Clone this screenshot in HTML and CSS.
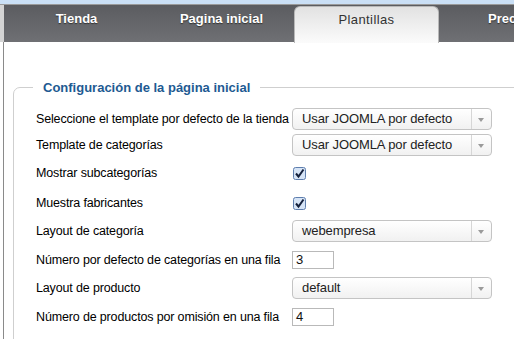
FILE: index.html
```html
<!DOCTYPE html>
<html lang="es">
<head>
    <meta charset="UTF-8">
    <meta name="viewport" content="width=device-width, initial-scale=1.0">
    <title>Plantillas</title>
    <link rel="stylesheet" href="styles.css">
</head>
<body>
    <div class="topstrip"></div>
    <div class="panel">
        <ul class="tabs">
            <li>Tienda</li>
            <li>Pagina inicial</li>
            <li class="active">Plantillas</li>
            <li>Precios</li>
        </ul>
        <fieldset class="config">
            <legend>Configuración de la página inicial</legend>
            <div class="row">
                <label>Seleccione el template por defecto de la tienda</label>
                <div class="select">Usar JOOMLA por defecto<span class="arrow"></span></div>
            </div>
            <div class="row">
                <label>Template de categorías</label>
                <div class="select">Usar JOOMLA por defecto<span class="arrow"></span></div>
            </div>
            <div class="row row-check">
                <label>Mostrar subcategorías</label>
                <span class="check">
                    <svg width="13" height="13" viewBox="0 0 13 13">
                        <rect x="0.5" y="0.5" width="12" height="12" rx="2" fill="#d6e4f6" stroke="#5f7fae"/>
                        <path d="M3 6.5 L5.5 9.5 L10.5 2.5" fill="none" stroke="#14213d" stroke-width="2"/>
                    </svg>
                </span>
            </div>
            <div class="row row-check">
                <label>Muestra fabricantes</label>
                <span class="check">
                    <svg width="13" height="13" viewBox="0 0 13 13">
                        <rect x="0.5" y="0.5" width="12" height="12" rx="2" fill="#d6e4f6" stroke="#5f7fae"/>
                        <path d="M3 6.5 L5.5 9.5 L10.5 2.5" fill="none" stroke="#14213d" stroke-width="2"/>
                    </svg>
                </span>
            </div>
            <div class="row">
                <label>Layout de categoría</label>
                <div class="select">webempresa<span class="arrow"></span></div>
            </div>
            <div class="row row-num">
                <label>Número por defecto de categorías en una fila</label>
                <div class="num">3</div>
            </div>
            <div class="row">
                <label>Layout de producto</label>
                <div class="select">default<span class="arrow"></span></div>
            </div>
            <div class="row row-num">
                <label>Número de productos por omisión en una fila</label>
                <div class="num">4</div>
            </div>
        </fieldset>
    </div>
</body>
</html>
```

FILE: styles.css
```css
html, body {
    margin: 0;
    overflow: hidden;
}
body {
    font-family: "Liberation Sans", Arial, sans-serif;
    font-size: 13px;
    color: #000;
    background-color: #fff;
}
.topstrip {
    height: 4px;
    background-color: #cadff5;
    border-bottom: 1px solid #9a9a9a;
}
.panel {
    margin-left: 3px;
    border-left: 1px solid #8a8a8a;
    height: 400px;
    width: 620px;
}
.tabs {
    list-style: none;
    margin: 0;
    padding: 0;
    height: 37px;
    display: flex;
    background: linear-gradient(#5b5c60, #6f7074);
    box-shadow: -4px 0 0 #d4d4d4;
}
.tabs li {
    width: 145px;
    flex: none;
    text-align: center;
    color: #fff;
    font-weight: bold;
    line-height: 28px;
    text-shadow: 0 1px 1px #333;
}
.tabs li.active {
    margin-top: 1px;
    height: 37px;
    border: 1px solid #b8b8b8;
    border-bottom: none;
    border-radius: 6px 6px 0 0;
    background: linear-gradient(#e2e2e2, #fbfbfb);
    color: #333;
    font-weight: normal;
    letter-spacing: 0.4px;
    text-shadow: none;
    line-height: 25px;
    box-sizing: border-box;
    width: 145px;
}
.config {
    margin: 38px 0 0 9px;
    padding: 12px 0 20px 22px;
    border: 1px solid #cfcfcf;
    border-radius: 7px;
    min-width: 0;
}
.config legend {
    margin-left: -3px;
    padding: 0 10px;
    color: #1e5a92;
    font-weight: bold;
    line-height: 15px;
}
.row {
    display: grid;
    grid-template-columns: 256px auto;
    align-items: center;
    min-height: 24px;
    margin-bottom: 2px;
}
.row label {
    white-space: nowrap;
    font-size: 12.5px;
    letter-spacing: -0.15px;
}
.row-check {
    min-height: 28px;
}
.row-num {
    min-height: 29px;
}
.select {
    position: relative;
    width: 189px;
    height: 20px;
    line-height: 20px;
    padding-left: 9px;
    border: 1px solid #c4c4c4;
    border-radius: 4px;
    background: linear-gradient(#ffffff, #f1f1f1);
    color: #222;
    letter-spacing: -0.1px;
}
.select .arrow {
    position: absolute;
    top: 0;
    right: 0;
    width: 19px;
    height: 20px;
    border-left: 1px solid #d6d6d6;
}
.select .arrow::after {
    content: "";
    position: absolute;
    left: 6px;
    top: 9px;
    border-left: 3.5px solid transparent;
    border-right: 3.5px solid transparent;
    border-top: 4px solid #9a9a9a;
}
.check {
    display: flex;
    margin-left: 1px;
}
.num {
    width: 37px;
    height: 16px;
    line-height: 16px;
    padding-left: 3px;
    border: 1px solid #b9b9b9;
    color: #111;
    background: #fff;
}
```
